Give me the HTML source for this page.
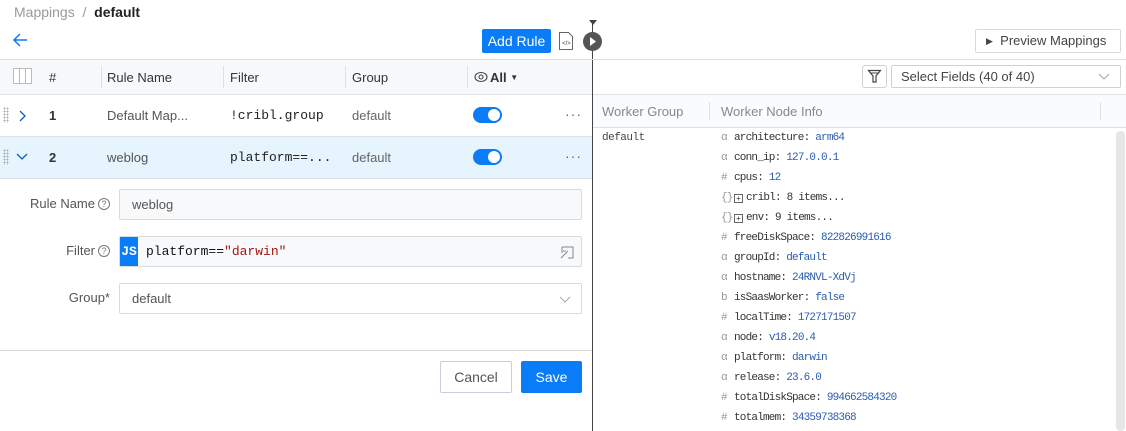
<!DOCTYPE html>
<html><head><meta charset="utf-8"><style>
*{box-sizing:border-box;margin:0;padding:0}
body{width:1126px;height:431px;overflow:hidden;background:#fff;font-family:"Liberation Sans",sans-serif;position:relative;color:#333}
.a{position:absolute}
.mono{font-family:"Liberation Mono","DejaVu Sans Mono",monospace}
.hl{position:absolute;height:1px;background:#dde1e5}
.vl{position:absolute;width:1px;background:#dde1e5}
.th{font-size:13px;color:#333;top:70px}
.rt{font-size:13px;top:108px}
.tog{position:absolute;width:29px;height:16px;border-radius:8px;background:#0b7cf7}
.tog:after{content:"";position:absolute;right:2px;top:2px;width:12px;height:12px;border-radius:6px;background:#fff}
.dots{position:absolute;font-size:14px;color:#666;letter-spacing:1px}
.grip{position:absolute;width:6px;height:16px;background-image:radial-gradient(circle,#aaa 0.8px,transparent 1px);background-size:3px 3px}
.lbl{position:absolute;font-size:13px;color:#555;text-align:right;width:110px;left:0}
.q{display:inline-block;width:12px;height:12px;border:1px solid #777;border-radius:50%;font-size:9px;text-align:center;line-height:10px;color:#777;margin-left:3px;vertical-align:1px}
.inp{position:absolute;left:119px;width:463px;height:31px;border:1px solid #d7dbe0;border-radius:2px;font-size:13px;color:#555;padding-left:12px;line-height:29px}
.kv{position:absolute;left:721px;font-size:11px;color:#333;letter-spacing:-0.8px;white-space:nowrap;font-family:"Liberation Mono","DejaVu Sans Mono",monospace}
.kv i{font-style:normal;color:#999;display:inline-block;width:13px;font-family:"Liberation Mono",monospace}
.kv b{font-weight:normal;color:#2a5db0;font-family:"Liberation Mono",monospace}
.pb{display:inline-block;width:9px;height:9px;border:1px solid #666;font-size:8px;line-height:7px;text-align:center;margin-right:3px;vertical-align:-1px;letter-spacing:0;font-family:"Liberation Sans",sans-serif}
</style></head><body>
<div class="a" style="left:14px;top:4px;font-size:14px;color:#999">Mappings&nbsp; / &nbsp;<span style="color:#222;font-weight:bold">default</span></div>
<svg class="a" style="left:12px;top:33px" width="16" height="14"><path d="M15 7H2M8 1L2 7l6 6" stroke="#0b7cf7" stroke-width="1.5" fill="none"/></svg>
<div class="a" style="left:482px;top:29px;width:69px;height:24px;background:#0b7cf7;border-radius:2px;color:#fff;font-size:14px;line-height:24px;text-align:center">Add Rule</div>
<svg class="a" style="left:558px;top:31px" width="16" height="20"><path d="M1.5 1.5h9l4 4v13h-13z" stroke="#666" fill="#fff"/><text x="4" y="14" font-size="6" fill="#444" font-family="Liberation Sans">&lt;/&gt;</text></svg>
<div class="vl" style="left:592px;top:22px;height:409px;background:#444"></div>
<svg class="a" style="left:588px;top:20px" width="10" height="6"><path d="M1 0h8L5 5z" fill="#444"/></svg>
<svg class="a" style="left:582px;top:31px" width="21" height="21"><circle cx="10.5" cy="10.5" r="9.5" fill="#555"/><path d="M8 6l6 4.5L8 15z" fill="#fff"/></svg>
<div class="hl" style="left:0;top:59px;width:1126px"></div>
<div class="a" style="left:0;top:60px;width:592px;height:34px;background:#f7f8fa"></div>
<div class="hl" style="left:0;top:94px;width:592px"></div>
<svg class="a" style="left:13px;top:68px" width="19" height="16"><rect x="0.5" y="0.5" width="18" height="15" fill="#fff" stroke="#bbb"/><path d="M6.5 1v14M12.5 1v14" stroke="#bbb"/></svg>
<div class="a th" style="left:49px">#</div>
<div class="vl" style="left:101px;top:66px;height:22px"></div><div class="a th" style="left:107px">Rule Name</div>
<div class="vl" style="left:223px;top:66px;height:22px"></div><div class="a th" style="left:230px">Filter</div>
<div class="vl" style="left:345px;top:66px;height:22px"></div><div class="a th" style="left:352px">Group</div>
<div class="vl" style="left:467px;top:66px;height:22px"></div>
<svg class="a" style="left:474px;top:71px" width="14" height="12"><ellipse cx="7" cy="6" rx="6" ry="4.5" fill="none" stroke="#444" stroke-width="1.1"/><circle cx="7" cy="6" r="2" fill="none" stroke="#444" stroke-width="1.1"/></svg>
<div class="a th" style="left:490px;font-weight:bold;color:#333">All <span style="font-size:8px;vertical-align:2px">▼</span></div>
<div class="grip" style="left:3px;top:107px"></div>
<svg class="a" style="left:19px;top:110px" width="8" height="12"><path d="M1 1l5 5-5 5" stroke="#0b5fc5" stroke-width="1.3" fill="none"/></svg>
<div class="a rt" style="left:49px;font-weight:bold">1</div>
<div class="a rt" style="left:107px;color:#555">Default Map...</div>
<div class="a rt mono" style="left:230px;color:#222">!cribl.group</div>
<div class="a rt" style="left:352px;color:#666">default</div>
<div class="tog" style="left:473px;top:107px"></div>
<div class="dots" style="left:565px;top:106px">···</div>
<div class="hl" style="left:0;top:136px;width:592px"></div>
<div class="a" style="left:0;top:137px;width:592px;height:41px;background:#e5f4fd"></div>
<div class="grip" style="left:3px;top:149px"></div>
<svg class="a" style="left:16px;top:153px" width="12" height="8"><path d="M1 1l5 5 5-5" stroke="#0b5fc5" stroke-width="1.3" fill="none"/></svg>
<div class="a" style="left:49px;top:150px;font-size:13px;font-weight:bold">2</div>
<div class="a" style="left:107px;top:150px;font-size:13px;color:#555">weblog</div>
<div class="a mono" style="left:230px;top:150px;font-size:13px;color:#222">platform==...</div>
<div class="a" style="left:352px;top:150px;font-size:13px;color:#666">default</div>
<div class="tog" style="left:473px;top:149px"></div>
<div class="dots" style="left:565px;top:148px">···</div>
<div class="hl" style="left:0;top:178px;width:592px"></div>
<div class="lbl" style="top:196px">Rule Name<span class="q">?</span></div>
<div class="inp" style="top:189px;background:#f8f9fb">weblog</div>
<div class="lbl" style="top:243px">Filter<span class="q">?</span></div>
<div class="inp" style="top:236px;background:#f8f9fb;padding-left:0">
<span class="a mono" style="left:0;top:0;width:18px;height:29px;background:#0b7cf7;color:#fff;font-size:13px;text-align:center;font-weight:bold">JS</span>
<span class="a mono" style="left:26px;top:0;color:#111;font-size:13px">platform==<span style="color:#a31515">"darwin"</span></span>
<svg class="a" style="right:6px;top:7px" width="16" height="16"><path d="M3 3h11v11H9M3 3v6M2 14l7-7M4 7h3" stroke="#888" fill="none"/></svg></div>
<div class="lbl" style="top:290px">Group*</div>
<div class="inp" style="top:283px">default
<svg class="a" style="right:10px;top:12px" width="12" height="7"><path d="M1 1l5 5 5-5" stroke="#aaa" fill="none"/></svg></div>
<div class="hl" style="left:0;top:350px;width:592px;background:#d6d9dc"></div>
<div class="a" style="left:440px;top:361px;width:72px;height:32px;border:1px solid #ccd;border-radius:2px;font-size:14px;color:#555;line-height:30px;text-align:center">Cancel</div>
<div class="a" style="left:521px;top:361px;width:61px;height:32px;background:#0b7cf7;border-radius:2px;font-size:14px;color:#fff;line-height:32px;text-align:center">Save</div>
<div class="a" style="left:975px;top:29px;width:146px;height:24px;border:1px solid #d6dadf;border-radius:2px;font-size:13px;color:#444;line-height:22px;padding-left:10px"><span style="font-size:9px;vertical-align:1px">▶</span>&nbsp; Preview Mappings</div>
<div class="a" style="left:862px;top:65px;width:25px;height:23px;border:1px solid #cdd2d8;border-radius:3px"></div>
<svg class="a" style="left:867px;top:69px" width="15" height="15"><path d="M1.5 1.5h12L9 7v6H6V7z" stroke="#444" fill="none" stroke-width="1.2"/><path d="M3 4h9" stroke="#444"/></svg>
<div class="a" style="left:891px;top:65px;width:230px;height:23px;border:1px solid #cdd2d8;border-radius:2px;font-size:13px;color:#444;line-height:21px;padding-left:9px">Select Fields (40 of 40)
<svg class="a" style="right:10px;top:7px" width="12" height="7"><path d="M1 1l5 5 5-5" stroke="#aaa" fill="none"/></svg></div>
<div class="hl" style="left:593px;top:94px;width:533px"></div>
<div class="a" style="left:593px;top:95px;width:533px;height:32px;background:#fafbfc"></div>
<div class="a" style="left:602px;top:104px;font-size:13px;color:#888">Worker Group</div>
<div class="vl" style="left:709px;top:102px;height:18px"></div>
<div class="a" style="left:721px;top:104px;font-size:13px;color:#888">Worker Node Info</div>
<div class="vl" style="left:1100px;top:102px;height:18px"></div>
<div class="hl" style="left:593px;top:127px;width:533px"></div>
<div class="a" style="left:1116px;top:131px;width:9px;height:300px;background:#e6e6e6;border-radius:4px"></div>
<div class="a mono" style="left:602px;top:132px;font-size:11px;color:#444;letter-spacing:-0.5px">default</div>
<div class="kv" style="top:132px"><i>α</i>architecture: <b>arm64</b></div>
<div class="kv" style="top:152px"><i>α</i>conn_ip: <b>127.0.0.1</b></div>
<div class="kv" style="top:172px"><i>#</i>cpus: <b>12</b></div>
<div class="kv" style="top:192px"><i>{}</i><span class="pb">+</span>cribl: 8 items...</div>
<div class="kv" style="top:212px"><i>{}</i><span class="pb">+</span>env: 9 items...</div>
<div class="kv" style="top:232px"><i>#</i>freeDiskSpace: <b>822826991616</b></div>
<div class="kv" style="top:252px"><i>α</i>groupId: <b>default</b></div>
<div class="kv" style="top:272px"><i>α</i>hostname: <b>24RNVL-XdVj</b></div>
<div class="kv" style="top:292px"><i>b</i>isSaasWorker: <b>false</b></div>
<div class="kv" style="top:312px"><i>#</i>localTime: <b>1727171507</b></div>
<div class="kv" style="top:332px"><i>α</i>node: <b>v18.20.4</b></div>
<div class="kv" style="top:352px"><i>α</i>platform: <b>darwin</b></div>
<div class="kv" style="top:372px"><i>α</i>release: <b>23.6.0</b></div>
<div class="kv" style="top:392px"><i>#</i>totalDiskSpace: <b>994662584320</b></div>
<div class="kv" style="top:412px"><i>#</i>totalmem: <b>34359738368</b></div>
</body></html>
